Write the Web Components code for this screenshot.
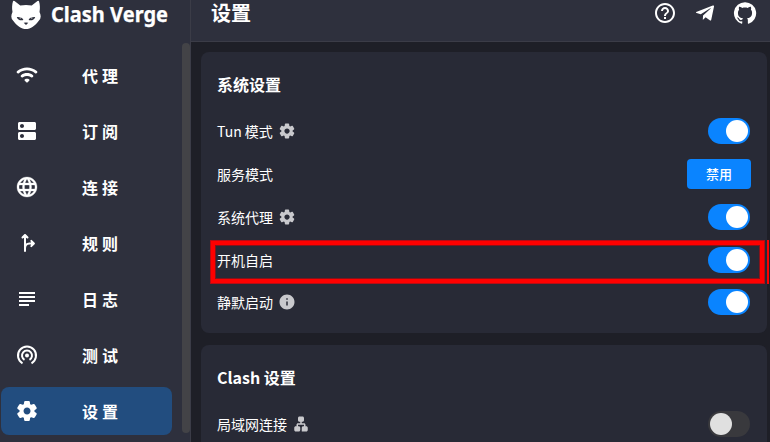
<!DOCTYPE html>
<html lang="zh-CN">
<head>
<meta charset="utf-8">
<title>Clash Verge</title>
<style>
html,body{margin:0;height:100%;overflow:hidden;background:#1e1f27}
body{font-family:"Noto Sans CJK SC",sans-serif;color:#fff}
</style>
</head>
<body>
<verge-app></verge-app>
<script>
const ICONS = {
  wifi: '<path d="M2.06 10.06c.51.51 1.32.56 1.87.1 4.67-3.84 11.45-3.84 16.13-.01.56.46 1.38.42 1.89-.09.59-.59.55-1.57-.1-2.1-5.71-4.67-13.97-4.67-19.69 0-.65.52-.7 1.5-.1 2.1zm7.76 7.76 1.47 1.47c.39.39 1.02.39 1.41 0l1.47-1.47c.47-.47.37-1.28-.23-1.59-1.22-.63-2.68-.63-3.91 0-.57.31-.68 1.12-.21 1.59zm-3.73-3.73c.49.49 1.26.54 1.83.13 2.44-1.73 5.72-1.73 8.16 0 .57.4 1.34.36 1.83-.13l.01-.01c.6-.6.56-1.62-.13-2.11-3.44-2.49-8.13-2.49-11.58 0-.69.5-.73 1.51-.12 2.12z"/>',
  dns: '<path d="M19.500 13H4.500c-.8 0-1.500.7-1.500 1.500v5c0 .8.7 1.500 1.500 1.500h15c.8 0 1.500-.7 1.500-1.500v-5c0-.8-.7-1.500-1.500-1.500zM7 19c-1.100 0-2-.9-2-2s.9-2 2-2 2 .9 2 2-.9 2-2 2zM19.500 3H4.500C3.700 3 3 3.700 3 4.500v5c0 .8.7 1.500 1.500 1.500h15c.8 0 1.500-.7 1.500-1.500v-5c0-.8-.7-1.500-1.500-1.500zM7 9c-1.100 0-2-.9-2-2s.9-2 2-2 2 .9 2 2-.9 2-2 2z"/>',
  globe: '<path stroke="currentColor" stroke-width=".3" d="M11.99 2C6.470 2 2 6.480 2 12s4.470 10 9.990 10C17.520 22 22 17.520 22 12S17.520 2 11.990 2zm6.930 6h-2.950c-.32-1.250-.78-2.450-1.380-3.560 1.840.63 3.370 1.910 4.330 3.560zM12 4.040c.83 1.200 1.480 2.530 1.910 3.960h-3.820c.43-1.430 1.080-2.760 1.910-3.960zM4.260 14C4.100 13.360 4 12.690 4 12s.1-1.360.26-2h3.380c-.08.66-.14 1.320-.14 2s.06 1.340.14 2H4.260zm.82 2h2.950c.32 1.250.78 2.450 1.380 3.560-1.840-.63-3.370-1.900-4.330-3.560zm2.950-8H5.080c.96-1.660 2.490-2.930 4.330-3.560C8.810 5.550 8.350 6.750 8.030 8zM12 19.960c-.83-1.200-1.480-2.530-1.910-3.960h3.820c-.43 1.430-1.080 2.760-1.910 3.960zM14.340 14H9.660c-.09-.66-.16-1.320-.16-2s.07-1.350.16-2h4.680c.09.65.16 1.320.16 2s-.07 1.340-.16 2zm.25 5.560c.6-1.110 1.060-2.310 1.380-3.560h2.950c-.96 1.650-2.490 2.930-4.330 3.560zM16.360 14c.08-.66.14-1.320.14-2s-.06-1.340-.14-2h3.380c.16.64.26 1.310.26 2s-.1 1.360-.26 2h-3.380z"/>',
  fork: '<path fill="none" stroke="currentColor" stroke-width="2" stroke-linecap="round" stroke-linejoin="round" d="M10 20V4.500M7.500 6.500 10 4l2.500 2.500M10 17.500c0-3 1.800-5 4.500-5H18.500M16.300 9.900l2.600 2.600-2.600 2.600"/><path d="M10 3.200 13.200 6.700H6.800zM19.600 12.500 16 15.700V9.300z"/>',
  logs: '<path d="M4 4h16v2H4zM4 8h16v2H4zM4 12h16v2H4zM4 16h10v2H4z" transform="translate(0 1)"/>',
  tether: '<g fill="none" stroke="currentColor" stroke-width="2" stroke-linecap="butt"><path d="M7.500 20.300a9 9 0 1 1 9 0M9.500 16.830a5 5 0 1 1 5 0"/></g><circle cx="12" cy="12.500" r="2"/>',
  gear: '<path d="M19.500 12c0-.23-.01-.45-.03-.68l1.860-1.410c.4-.3.51-.86.26-1.300l-1.870-3.230c-.25-.44-.79-.62-1.250-.42l-2.150.91c-.37-.26-.76-.49-1.170-.68l-.29-2.310c-.06-.5-.49-.88-.99-.88h-3.730c-.51 0-.94.38-1 .88l-.29 2.310c-.41.19-.8.42-1.170.68l-2.150-.91c-.46-.2-1-.02-1.250.42L2.410 8.620c-.25.44-.14.99.26 1.300l1.860 1.410c-.02.22-.03.44-.03.67s.01.45.03.68l-1.860 1.410c-.4.3-.51.86-.26 1.300l1.870 3.230c.25.44.79.62 1.250.42l2.150-.91c.37.26.76.49 1.170.68l.29 2.310c.06.5.49.88.99.88h3.730c.5 0 .93-.38.99-.88l.29-2.310c.41-.19.8-.42 1.170-.68l2.150.91c.46.2 1 .02 1.250-.42l1.870-3.230c.25-.44.14-.99-.26-1.300l-1.860-1.410c.03-.23.04-.45.04-.68zm-7.460 3.500c-1.930 0-3.500-1.570-3.500-3.500s1.570-3.500 3.500-3.500 3.500 1.570 3.500 3.500-1.570 3.500-3.500 3.500z"/>',
  help: '<path d="M11 18h2v-2h-2v2zm1-16C6.480 2 2 6.480 2 12s4.480 10 10 10 10-4.480 10-10S17.520 2 12 2zm0 18c-4.410 0-8-3.590-8-8s3.590-8 8-8 8 3.590 8 8-3.590 8-8 8zm0-14c-2.210 0-4 1.790-4 4h2c0-1.100.9-2 2-2s2 .9 2 2c0 2-3 1.750-3 5h2c0-2.250 3-2.500 3-5 0-2.210-1.790-4-4-4z"/>',
  telegram: '<path d="M9.780 18.650l.28-4.230 7.680-6.920c.34-.31-.07-.46-.52-.19L7.740 13.300 3.640 12c-.88-.25-.89-.86.2-1.300l15.970-6.160c.73-.33 1.430.18 1.150 1.300l-2.720 12.810c-.19.910-.74 1.130-1.500.71L12.600 16.300l-1.990 1.930c-.23.23-.42.42-.83.42z"/>',
  github: '<path d="M12 1.270a11 11 0 0 0-3.480 21.460c.55.09.73-.28.73-.55v-1.840c-3.030.64-3.670-1.460-3.670-1.460-.55-1.290-1.280-1.650-1.280-1.650-.92-.65.1-.65.1-.65 1.100 0 1.730 1.100 1.730 1.100.92 1.650 2.570 1.200 3.210.92a2 2 0 0 1 .64-1.470c-2.470-.27-5.040-1.190-5.040-5.500 0-1.100.46-2.100 1.200-2.840a3.760 3.760 0 0 1 0-2.930s.91-.28 3.110 1.100c1.800-.49 3.700-.49 5.500 0 2.100-1.380 3.020-1.100 3.020-1.100a3.760 3.760 0 0 1 .1 2.930c.74.74 1.200 1.740 1.200 2.840 0 4.320-2.580 5.230-5.040 5.500.45.37.82.92.82 2.020v3.030c0 .27.1.64.73.55A11 11 0 0 0 12 1.270"/>',
  info: '<path d="M12 2C6.480 2 2 6.480 2 12s4.480 10 10 10 10-4.480 10-10S17.520 2 12 2zm0 15c-.55 0-1-.45-1-1v-4c0-.55.45-1 1-1s1 .45 1 1v4c0 .55-.45 1-1 1zm1-8h-2V7h2v2z"/>',
  lan: '<path d="M13 22h6c1.100 0 2-.9 2-2v-3c0-1.100-.9-2-2-2h-1v-2c0-1.100-.9-2-2-2h-3V9h1c1.100 0 2-.9 2-2V4c0-1.100-.9-2-2-2h-4C8.900 2 8 2.900 8 4v3c0 1.100.9 2 2 2h1v2H8c-1.100 0-2 .9-2 2v2H5c-1.100 0-2 .9-2 2v3c0 1.100.9 2 2 2h4c1.100 0 2-.9 2-2v-3c0-1.100-.9-2-2-2H8v-2h8v2h-1c-1.100 0-2 .9-2 2z"/>',
  cat: '<path fill-rule="evenodd" d="M2 1.300Q2.400.2 3.500 1L9.300 5.600Q15 4.300 20.700 5.600L26.500 1Q27.600.2 28 1.300C29 4.800 29.200 8 28.500 12C29.200 13.500 29.700 15 29.700 16.500Q29.800 19.300 27.400 21.200C24.500 25.500 19.500 29 15 29S5.500 25.500 2.600 21.200Q.2 19.300.3 16.500C.3 15 .8 13.500 1.500 12C.8 8 1 4.800 2 1.300zM5.800 16.900C6.500 20 10 20.800 12.400 19.900C12 17.800 9 16.700 5.800 16.900zM24.200 16.900C21 16.700 18 17.800 17.600 19.900C20 20.800 23.500 20 24.200 16.900zM12.700 22.800L15 24.900L17.300 22.800Q15 22.200 12.700 22.800z"/><path d="M8.600 17.300h1.500v1.800h-1.500zM19.900 17.300h1.500v1.800h-1.500z" opacity=".4"/>'
};
const define = (name, render) => customElements.define(name, class extends HTMLElement {
  constructor(){ super(); this.attachShadow({mode:'open'}); }
  connectedCallback(){ this.shadowRoot.innerHTML = render(this); }
});

define('verge-icon', el => {
  const n = el.getAttribute('name'), s = el.getAttribute('size') || 24;
  return `<style>:host{display:block;flex:none;width:${s}px;height:${s}px}svg{display:block;width:100%;height:100%;fill:currentColor}</style>
  <svg viewBox="${n === 'cat' ? '0 0 30 30' : '0 0 24 24'}">${ICONS[n]}</svg>`;
});

define('verge-logo', () => `<style>
  :host{display:flex;height:48px;padding-left:11px;gap:9px;box-sizing:border-box}
  svg{display:block;width:120px;height:32px}
  text{font:700 20.5px "Noto Sans",sans-serif;fill:#fff;stroke:#fff;stroke-width:.25px}
  </style><verge-icon name="cat" size="30"></verge-icon>
  <svg><text x="1" y="22" textLength="117" lengthAdjust="spacingAndGlyphs">Clash Verge</text></svg>`);

define('verge-nav-item', el => `<style>
  :host{display:flex;align-items:center;box-sizing:border-box;height:48px;width:171px;padding-left:14px;border-radius:8px}
  :host([selected]){background:#224d7f}
  span{flex:1;padding-left:43px;font-size:16px;font-weight:700;line-height:24px;letter-spacing:4px;white-space:nowrap}
  </style><verge-icon name="${el.getAttribute('icon')}"></verge-icon><span><slot></slot></span>`);

define('verge-sidebar', () => `<style>
  :host{display:flex;flex-direction:column;width:190px;height:442px;background:#2e303d;border-right:1px solid #3b3c47;flex:none}
  .body{display:flex;justify-content:space-between;margin-top:-5px}
  nav{display:flex;flex-direction:column;gap:8px;padding:8px 0 0 1px}
  .bar{width:8px;height:390px;border-radius:4px;background:#434347}
  </style><verge-logo></verge-logo>
  <div class="body"><nav>
  <verge-nav-item icon="wifi">代理</verge-nav-item>
  <verge-nav-item icon="dns">订阅</verge-nav-item>
  <verge-nav-item icon="globe">连接</verge-nav-item>
  <verge-nav-item icon="fork">规则</verge-nav-item>
  <verge-nav-item icon="logs">日志</verge-nav-item>
  <verge-nav-item icon="tether">测试</verge-nav-item>
  <verge-nav-item icon="gear" selected>设置</verge-nav-item>
  </nav><div class="bar"></div></div>`);

define('verge-header', () => `<style>
  :host{display:flex;justify-content:space-between;box-sizing:border-box;height:42px;padding:1px 13px 0 20px;background:#2e303d;border-bottom:1px solid #3b3c47}
  h1{margin:0;font-size:20px;line-height:24px;font-weight:700}
  div{display:flex;gap:16px}
  </style><h1>设置</h1><div><verge-icon name="help"></verge-icon><verge-icon name="telegram"></verge-icon><verge-icon name="github"></verge-icon></div>`);

define('verge-switch', () => `<style>
  :host{display:flex;box-sizing:border-box;width:42px;height:26px;padding:2px;border-radius:13px;background:#39393d}
  i{width:22px;height:22px;border-radius:50%;background:#e0e0e0}
  :host([on]){background:#0a84ff;justify-content:flex-end}
  :host([on]) i{background:#fff}
  </style><i></i>`);

define('verge-button', () => `<style>
  :host{display:block;width:64px;height:30px;border-radius:4px;background:#0a84ff;text-align:center;font-size:13px;font-weight:500;line-height:30px;margin-right:-1px}
  </style><slot></slot>`);

define('verge-row', el => `<style>
  :host{display:flex;align-items:center;justify-content:space-between;height:var(--row,42px)}
  .label{display:flex;align-items:center;gap:5px;font-size:14px;line-height:21px}
  verge-icon{color:#c9c9cd}
  </style><div class="label"><slot></slot>${el.hasAttribute('icon') ? `<verge-icon name="${el.getAttribute('icon')}" size="18"></verge-icon>` : ''}</div><slot name="control"></slot>`);

define('verge-card', el => `<style>
  :host{display:block;box-sizing:border-box;height:281px;padding:20px 17px 0 16px;border-radius:8px;background:#282a36}
  h2{margin:0 0 12px;font-size:16px;line-height:25px;font-weight:700}
  </style><h2>${el.getAttribute('heading')}</h2><slot></slot>`);

define('verge-highlight', () => `<style>
  :host{position:absolute;left:210px;top:240px;width:555px;height:44px;box-sizing:border-box;border:5px solid #f00;outline:1px solid #b50c14;outline-offset:-1px;box-shadow:inset 0 0 0 1px #84131a}
  i{position:absolute;left:552px;top:-5px;width:2px;height:44px;background:#f00}
  </style><i></i>`);

define('verge-app', () => `<style>
  :host{display:flex;position:relative;width:770px;height:442px;overflow:hidden;background:#1e1f27}
  main{flex:1;min-width:0}
  section{display:flex;flex-direction:column;gap:12px;padding:10px 3px 0 10px}
  </style><verge-sidebar></verge-sidebar>
  <main><verge-header></verge-header><section>
  <verge-card heading="系统设置">
    <verge-row icon="gear" style="--row:44px">Tun 模式<verge-switch slot="control" on></verge-switch></verge-row>
    <verge-row>服务模式<verge-button slot="control">禁用</verge-button></verge-row>
    <verge-row icon="gear" style="--row:44px">系统代理<verge-switch slot="control" on></verge-switch></verge-row>
    <verge-row>开机自启<verge-switch slot="control" on></verge-switch></verge-row>
    <verge-row icon="info">静默启动<verge-switch slot="control" on></verge-switch></verge-row>
  </verge-card>
  <verge-card heading="Clash 设置">
    <verge-row icon="lan" style="--row:44px">局域网连接<verge-switch slot="control"></verge-switch></verge-row>
  </verge-card>
  </section></main><verge-highlight></verge-highlight>`);
</script>
</body>
</html>
